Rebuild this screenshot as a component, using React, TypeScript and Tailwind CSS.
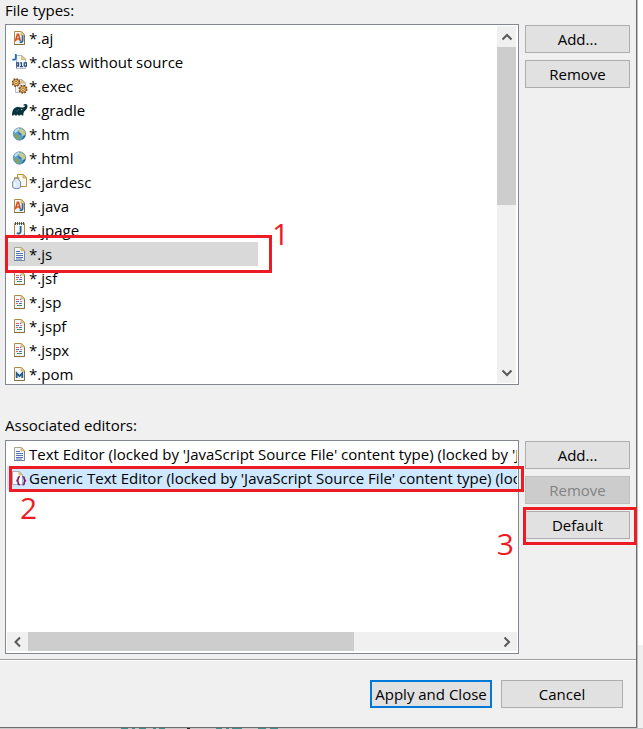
import type { ReactNode } from "react";

type IconName =
  | "java" | "class" | "exec" | "gradle" | "globe" | "jar"
  | "page" | "text" | "jsp" | "maven" | "braces";

/* Sheet of paper with a folded corner, shared by most of the file icons. */
function Sheet({ stroke = "#b08f45", dark = "#84723f" }: { stroke?: string; dark?: string }) {
  return (
    <>
      <path d="M2.5 1.5H9.5L12.5 4.5V14.5H2.5Z" fill="#f4f7fc" stroke={stroke} />
      <path d="M12.5 5V14.5H2" fill="none" stroke={dark} />
      <path d="M9 1.5V5H12.5Z" fill="#ecd08c" stroke="#c9a75c" strokeWidth=".7" />
    </>
  );
}

function Gear({ x, y }: { x: number; y: number }) {
  return (
    <g transform={`translate(${x} ${y})`}>
      <circle r="3.6" fill="none" stroke="#6b3a0e" strokeWidth="1.8" strokeDasharray="1.5 1.33" />
      <circle r="3.1" fill="#f5c152" stroke="#8a4e18" strokeWidth=".8" />
      <circle r="1.2" fill="#fff" stroke="#7a4514" strokeWidth=".7" />
    </g>
  );
}

const drawings: Record<IconName, ReactNode> = {
  java: (
    <>
      <Sheet />
      <path d="M3.4 11.2L5.4 4.4H6.6L8.4 11.2M4.2 9H7.6" fill="none" stroke="#d2521e" strokeWidth="1.6" />
      <path d="M10.6 5.2V10C10.6 12.2 9.4 12.6 7.8 12.2" fill="none" stroke="#2c6aa8" strokeWidth="1.9" />
    </>
  ),
  class: (
    <>
      <path d="M4.5 1.5H10L13.5 5V14.5H4.5Z" fill="#f4f7fc" stroke="#b4b9c6" />
      <path d="M9.5 1.5V5.5H13.5Z" fill="#ecd08c" stroke="#c9a75c" strokeWidth=".7" />
      <path d="M3.8 0V4C3.8 5.8 2.2 6 .4 5.4" fill="none" stroke="#2c6aa8" strokeWidth="1.8" />
      <path d="M4.5 8V14.5" stroke="#8a93ab" />
      <path d="M4.8 8.8H6.6V12.2H4.8ZM8.1 8.8H9.4V12.8M8 12.7H10.8M12.2 8.8H14.4V12.2H12.2Z" fill="#fff" stroke="#27497d" strokeWidth="1.2" />
    </>
  ),
  exec: (
    <>
      <path d="M5.5 1.5H10L13.5 5V14.5H3.5V8Z" fill="#eef2fa" stroke="#b5b9c4" />
      <path d="M9.5 1.5V5H13Z" fill="#ecd08c" stroke="#c9a75c" strokeWidth=".7" />
      <Gear x={4} y={4.6} />
      <Gear x={11} y={11.2} />
    </>
  ),
  gradle: (
    <>
      <path
        d="M0 13.4C.1 9.6 1 6.4 3.6 5.4C6 4.4 8 5.2 9.8 5.6C11.2 5.7 12.3 5.2 13 4.2C13.5 3.5 12.8 3.2 12.2 3.7L11.2 2.9C12.6 1.6 15.2 1.9 15.5 4C15.7 6.2 14 8 12.4 9.2C11.6 10 11.4 11.6 11.3 13.4H9.7C9.5 12.2 8.4 12.2 8.1 13.4H6.4C6.1 12.2 5 12.2 4.7 13.4H3.1C2.7 12.2 1.8 12.2 1.5 13.4Z"
        fill="#08323c"
      />
      <path d="M3.6 8.4C5 9.8 6.8 9 6.6 7.2" fill="none" stroke="#4a737b" strokeWidth=".7" />
      <circle cx="9.8" cy="7.6" r=".6" fill="#fff" />
    </>
  ),
  globe: (
    <>
      <circle cx="7.5" cy="8" r="6.2" fill="#5a9fca" stroke="#6588a0" strokeWidth=".8" />
      <path d="M2 6C3 3 5 2 7.6 2L6.6 4.4L3.6 7Z" fill="#b4deef" />
      <path d="M7 3.2L9.6 2.2L12.8 5.2L13.2 8.4L10.8 10L9.2 7.2L7.2 6.2Z" fill="#c9cb8e" />
      <path d="M2.4 8L5.8 8.6L8.2 11L6.8 13.8C4.2 13.2 2.3 11 2.4 8Z" fill="#82a365" />
      <path d="M9.4 13.6C11.8 13 13.2 11 13.5 8.8L11.4 10.6Z" fill="#276a9f" />
      <path d="M5.4 6.4L7.4 6.2L9.6 8.4L7.6 9Z" fill="#3678ac" />
    </>
  ),
  jar: (
    <>
      <path d="M5.5 .5H11.5L14.5 3.5V12.5H5.5Z" fill="#fbf8ee" stroke="#b99339" />
      <path d="M11 .5V4H14.5Z" fill="#ecd08c" stroke="#b99339" strokeWidth=".7" />
      <path d="M2.4 4.2H6.8V5.8L8.6 8V13C8.6 15 .6 15 .6 13V8L2.4 5.8Z" fill="#dce9f7" stroke="#7089af" />
      <path d="M2 3.9H7.2" stroke="#bd9542" strokeWidth="1.3" />
      <path d="M2.6 8.2V13.2" stroke="#fff" strokeWidth="1.2" />
    </>
  ),
  page: (
    <>
      <path d="M2.5 1.5H12.5V14.5H2.5Z" fill="#f3f8fd" stroke="#b08f45" />
      <path d="M3.5 0V3M5.5 0V3M7.5 0V3M9.5 0V3M11.5 0V3" stroke="#38455d" strokeWidth=".9" />
      <path d="M8.6 4V9.4C8.6 11.5 6.7 11.9 4.8 11.1" fill="none" stroke="#2c6391" strokeWidth="1.9" />
      <path d="M10.5 13.5L13 11V14.5H9.5Z" fill="#40966c" />
    </>
  ),
  text: (
    <>
      <Sheet stroke="#a5a58f" dark="#7186a9" />
      <path d="M4 5.5H8M4 7.5H11M4 9.5H11M4 11.5H11M4 13H10" stroke="#5876b2" />
    </>
  ),
  jsp: (
    <>
      <Sheet />
      <path d="M4 5.5H7M4 9.5H6M8 7.5H10" stroke="#df6570" />
      <path d="M8 5.5H9M4 7.5H7M7 9.5H10" stroke="#536cae" />
      <path d="M5 11.5H10" stroke="#3d9470" />
    </>
  ),
  maven: (
    <>
      <Sheet />
      <path d="M4.7 12V7.2L7.5 10.2L10.3 7.2V12" fill="none" stroke="#245c8d" strokeWidth="1.8" />
    </>
  ),
  braces: (
    <>
      <path d="M.5 1.5H7.5L10.5 4.5V14.5H.5Z" fill="#f8fafd" stroke="#a9adba" />
      <path d="M7 1.5V5H10.5Z" fill="#ecd08c" stroke="#c9a75c" strokeWidth=".7" />
      <path
        d="M7.8 6.8C6 6.6 6.2 8 6.2 9C6.2 10 5.6 10.6 4.4 10.7C5.6 10.8 6.2 11.4 6.2 12.4C6.2 13.6 6 14.8 7.8 14.6M10.6 6.8C12.4 6.6 12.2 8 12.2 9C12.2 10 12.8 10.6 14 10.7C12.8 10.8 12.2 11.4 12.2 12.4C12.2 13.6 12.4 14.8 10.6 14.6"
        fill="none" stroke="#7b1f6b" strokeWidth="1.7"
      />
    </>
  ),
};

function Icon({ name }: { name: IconName }) {
  return (
    <svg viewBox="0 0 16 16" className="size-4 shrink-0" aria-hidden="true">
      {drawings[name]}
    </svg>
  );
}

function Chevron({ d }: { d: string }) {
  return (
    <svg viewBox="0 0 12 12" className="size-3" aria-hidden="true">
      <path d={d} fill="none" stroke="#5a5a5a" strokeWidth="2" />
    </svg>
  );
}

const fileTypes: { label: string; icon: IconName }[] = [
  { label: "*.aj", icon: "java" },
  { label: "*.class without source", icon: "class" },
  { label: "*.exec", icon: "exec" },
  { label: "*.gradle", icon: "gradle" },
  { label: "*.htm", icon: "globe" },
  { label: "*.html", icon: "globe" },
  { label: "*.jardesc", icon: "jar" },
  { label: "*.java", icon: "java" },
  { label: "*.jpage", icon: "page" },
  { label: "*.js", icon: "text" },
  { label: "*.jsf", icon: "jsp" },
  { label: "*.jsp", icon: "jsp" },
  { label: "*.jspf", icon: "jsp" },
  { label: "*.jspx", icon: "jsp" },
  { label: "*.pom", icon: "maven" },
];

const plain = "border border-[#adadad] bg-[#e1e1e1]";

function SideButton({ children, disabled }: { children: ReactNode; disabled?: boolean }) {
  return (
    <button
      type="button"
      disabled={disabled}
      className={
        disabled
          ? "h-7 w-full border border-[#bfbfbf] bg-[#cccccc] leading-6 text-[#838383]"
          : `h-7 w-full leading-6 ${plain}`
      }
    >
      {children}
    </button>
  );
}

export default function App() {
  return (
    <div className="flex h-screen flex-col overflow-hidden bg-[#c8c8c8] font-['Open_Sans','Noto_Sans',sans-serif] text-[15px] leading-6 text-black">
      <div className="flex">
        <main className="min-w-0 flex-1 border-r border-b border-[#6d6d6d] bg-[#f0f0f0]">
          <section className="pr-1.5 pl-[5px]">
            <h2 id="types" className="-mt-0.5 mb-0.5">File types:</h2>
            <div className="flex gap-1.5">
              <div className="relative min-w-0 flex-1">
                <div className="flex h-[361px] overflow-hidden border border-[#828790] bg-white p-px">
                  <ul role="listbox" aria-labelledby="types" className="min-w-0 flex-1">
                    {fileTypes.map(({ label, icon }) => (
                      <li
                        key={label}
                        role="option"
                        aria-selected={label === "*.js"}
                        className="flex h-6 w-[251px] items-center gap-px pl-[5px] aria-selected:bg-[#d9d9d9]"
                      >
                        <Icon name={icon} />
                        <span>{label}</span>
                      </li>
                    ))}
                  </ul>
                  <div className="mr-px flex w-[19px] flex-col bg-[#f0f0f0]">
                    <button type="button" aria-label="Scroll up" className="flex h-[21px] items-center justify-center">
                      <Chevron d="M1.5 8.5L6 4L10.5 8.5" />
                    </button>
                    <div className="h-[158px] bg-[#cdcdcd]" />
                    <button type="button" aria-label="Scroll down" className="mt-auto flex h-[21px] items-center justify-center">
                      <Chevron d="M1.5 3.5L6 8L10.5 3.5" />
                    </button>
                  </div>
                </div>
                <div className="pointer-events-none absolute top-[211px] left-0 h-[38px] w-[267px] border-3 border-[#ed1c24]" />
                <span className="absolute top-[190px] left-[267px] text-[30px] leading-10 text-[#ed1c24]">1</span>
              </div>
              <div className="flex w-[105px] flex-col gap-[7px] pt-px">
                <SideButton>Add...</SideButton>
                <SideButton>Remove</SideButton>
              </div>
            </div>
          </section>

          <section className="mt-7 pr-1.5 pl-[5px]">
            <h2 id="editors" className="mb-[3px]">Associated editors:</h2>
            <div className="flex gap-1.5">
              <div className="relative min-w-0 flex-1">
                <div className="flex h-[214px] flex-col overflow-hidden border border-[#828790] bg-white p-px">
                  <ul role="listbox" aria-labelledby="editors" className="min-h-0 flex-1 overflow-hidden whitespace-nowrap">
                    <li role="option" aria-selected="false" className="flex h-6 items-center gap-px pl-[5px]">
                      <Icon name="text" />
                      <span>Text Editor (locked by 'JavaScript Source File' content type) (locked by 'J</span>
                    </li>
                    <li role="option" aria-selected="true" className="flex h-6 items-center gap-px bg-[#cde8ff] pl-[5px]">
                      <Icon name="braces" />
                      <span>Generic Text Editor (locked by 'JavaScript Source File' content type) (loc</span>
                    </li>
                  </ul>
                  <div className="mb-px flex h-[19px] bg-[#f0f0f0]">
                    <button type="button" aria-label="Scroll left" className="flex w-[21px] items-center justify-center">
                      <Chevron d="M8 1.5L3.5 6L8 10.5" />
                    </button>
                    <div className="w-[326px] bg-[#cdcdcd]" />
                    <button type="button" aria-label="Scroll right" className="ml-auto flex w-[21px] items-center justify-center">
                      <Chevron d="M3.5 1.5L8 6L3.5 10.5" />
                    </button>
                  </div>
                </div>
                <div className="pointer-events-none absolute top-[26px] -right-[5px] left-1 h-[26px] border-3 border-[#ed1c24]" />
                <span className="absolute top-12 left-[15px] text-[30px] leading-10 text-[#ed1c24]">2</span>
                <span className="absolute top-[84px] right-[5px] text-[30px] leading-10 text-[#ed1c24]">3</span>
              </div>
              <div className="flex w-[105px] flex-col gap-[7px] pt-px">
                <SideButton>Add...</SideButton>
                <SideButton disabled>Remove</SideButton>
                <div className="relative">
                  <SideButton>Default</SideButton>
                  <div className="pointer-events-none absolute -inset-x-0.5 -top-1 h-[38px] w-[114px] border-3 border-[#ed1c24]" />
                </div>
              </div>
            </div>
          </section>

          <footer className="mt-[5px] flex justify-end gap-[9px] border-t border-[#a0a0a0] pt-5 pr-[13px] pb-[19px] shadow-[inset_0_1px_0_#fff]">
            <button type="button" className="h-7 w-[122px] border-2 border-[#0078d7] bg-[#e1e1e1] leading-6 whitespace-nowrap">
              Apply and Close
            </button>
            <button type="button" className={`h-7 w-[122px] leading-6 ${plain}`}>Cancel</button>
          </footer>
        </main>
        <aside className="flex w-1.5 flex-col border-l border-[#bdbdbd] bg-white">
          <div className="mt-auto h-[83px] bg-[#f0f0f0]" />
        </aside>
      </div>
      <svg className="h-px w-full shrink-0" viewBox="0 0 643 1" preserveAspectRatio="none" aria-hidden="true">
        <path d="M121 .5h7M132 .5h3M139 .5h7M153 .5h3M159 .5h6M216 .5h6M226 .5h3M232 .5h10M258 .5h8M270 .5h8" stroke="#3a8f8b" />
        <path d="M187 .5h3" stroke="#222" />
      </svg>
    </div>
  );
}
